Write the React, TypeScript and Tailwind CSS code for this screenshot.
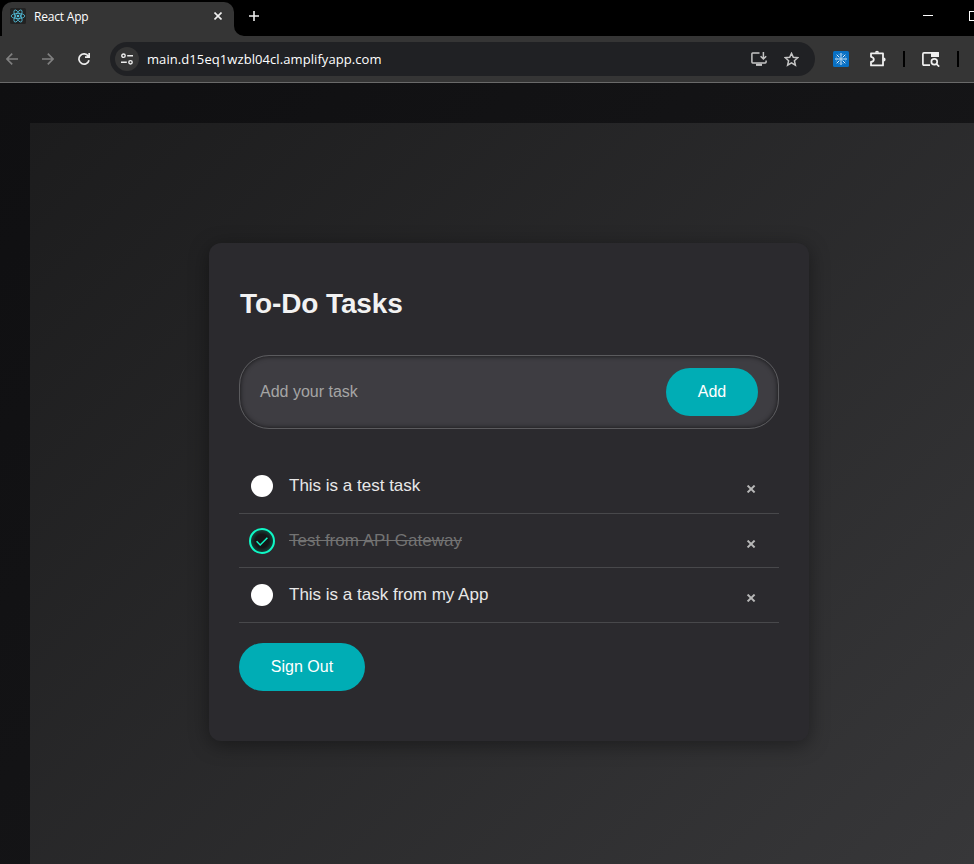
import React from "react";

const arial = "font-['Liberation_Sans',Arial,sans-serif]";

function Atom({ className }: { className: string }) {
  return (
    <svg viewBox="0 0 16 16" className={className} fill="none" stroke="#53c1de" strokeWidth="0.8">
      <rect width="16" height="16" rx="1.5" fill="#222222" stroke="none" />
      <ellipse cx="8" cy="8" rx="6.8" ry="2.6" />
      <ellipse cx="8" cy="8" rx="6.8" ry="2.6" transform="rotate(60 8 8)" />
      <ellipse cx="8" cy="8" rx="6.8" ry="2.6" transform="rotate(120 8 8)" />
      <circle cx="8" cy="8" r="1.3" fill="#53c1de" stroke="none" />
    </svg>
  );
}

function TabStrip() {
  return (
    <div className="flex h-9 bg-black pl-[2px]">
      <div className="relative mt-[2px] flex h-[34px] w-[232px] items-center rounded-t-[10px] bg-[#353535] pl-2 pb-[5px]">
        <Atom className="mt-[-1px] h-4 w-4" />
        <span className="mt-px ml-2 flex-1 text-[12px] leading-4 tracking-[-0.2px] text-white">React App</span>
        <svg className="mt-[-1px] mr-[12px] h-2 w-2" viewBox="0 0 8 8" stroke="#f0f0f0" strokeWidth="1.6">
          <path d="M0.5 0.5L7.5 7.5M7.5 0.5L0.5 7.5" />
        </svg>
        <svg className="absolute -right-[10px] bottom-0 h-[10px] w-[10px]" viewBox="0 0 10 10" fill="#353535">
          <path d="M0 0A10 10 0 0 0 10 10H0Z" />
        </svg>
      </div>
      <svg className="mt-[11px] ml-[15px] h-[10px] w-[10px]" viewBox="0 0 10 10" stroke="#eeeeee" strokeWidth="1.6">
        <path d="M5 0V10M0 5H10" />
      </svg>
      <div className="ml-auto flex pt-[11px]">
        <div className="mt-1 h-px w-[10px] bg-white" />
        <div className="ml-9 h-[10px] w-[5px] border border-r-0 border-white" />
      </div>
    </div>
  );
}

function Toolbar() {
  return (
    <div className="flex h-[47px] items-center border-b border-[#6a6a6a] bg-[#353535]">
      <svg className="ml-[6px] h-3 w-3" viewBox="0 0 12 12" fill="none" stroke="#808080" strokeWidth="1.6">
        <path d="M12 6H1M6.2 0.6L0.9 6L6.2 11.4" />
      </svg>
      <svg className="ml-6 h-3 w-3" viewBox="0 0 12 12" fill="none" stroke="#808080" strokeWidth="1.6">
        <path d="M0 6H11M5.8 0.6L11.1 6L5.8 11.4" />
      </svg>
      <svg className="ml-6 h-3 w-3" viewBox="0 0 12 12" fill="none" stroke="#eeeeee" strokeWidth="1.7">
        <path d="M10.3 3.2A5.1 5.1 0 1 0 11 7.2M11.2 0V4.2H7" />
      </svg>
      <div className="ml-5 flex h-[34px] w-[705px] items-center rounded-full bg-[#202124] pl-[5px]">
        <div className="flex h-6 w-6 items-center justify-center rounded-full bg-[#353535]">
          <svg className="h-3 w-3" viewBox="0 0 12 12" fill="none" stroke="#eeeeee" strokeWidth="1.4">
            <circle cx="2.5" cy="2.7" r="1.7" />
            <path d="M6.2 2.7H12M0 9.3H5.8" />
            <circle cx="9.5" cy="9.3" r="1.7" />
          </svg>
        </div>
        <span className="ml-2 text-[13px] leading-5 tracking-[0.08px] text-white">main.d15eq1wzbl04cl.amplifyapp.com</span>
        <svg className="ml-auto h-[14px] w-4" viewBox="0 0 16 14" fill="none" stroke="#c5c5c5" strokeWidth="1.5">
          <path d="M8.5 0.9H1.7Q0.9 0.9 0.9 1.7V10Q0.9 10.9 1.7 10.9H14.2Q15.1 10.9 15.1 10V8.6M12.4 0V6.5M9.6 4.2L12.4 7L15.2 4.2" />
          <path d="M5 12.8H11" strokeWidth="2.2" />
        </svg>
        <svg className="mr-4 ml-[17px] h-[15px] w-[15px]" viewBox="0 0 15 15" fill="none" stroke="#c5c5c5" strokeWidth="1.5">
          <path d="M7.5 1.4L9.3 5.3L13.7 5.7L10.4 8.7L11.4 13.2L7.5 10.9L3.6 13.2L4.6 8.7L1.3 5.7L5.7 5.3Z" />
        </svg>
      </div>
      <svg className="ml-[18px] h-4 w-4" viewBox="0 0 16 16" fill="none" stroke="#ffffff" strokeWidth="0.9">
        <rect width="16" height="16" rx="1.5" fill="#0870c4" stroke="none" />
        <circle cx="8" cy="8" r="1.2" />
        <path d="M8 2V5.8M8 10.2V14M2 8H5.8M10.2 8H14M3.7 3.7L6.4 6.4M9.6 9.6L12.3 12.3M12.3 3.7L9.6 6.4M6.4 9.6L3.7 12.3" />
        <path d="M5.8 2.8L6.3 4M10.2 2.8L9.7 4M5.8 13.2L6.3 12M10.2 13.2L9.7 12M2.8 5.8L4 6.3M13.2 5.8L12 6.3M2.8 10.2L4 9.7M13.2 10.2L12 9.7" strokeWidth="0.4" />
      </svg>
      <svg className="mb-[2px] ml-[21px] h-[17px] w-4" viewBox="0 0 16 17" fill="none" stroke="#f0f0f0" strokeWidth="1.8">
        <path d="M1 3.4H13V15.4H1V12Q3.8 11.5 3.8 9.4Q3.8 7.3 1 6.8Z" strokeLinejoin="round" />
        <path d="M5 2.8A2 2 0 0 1 9 2.8ZM13.6 7.4A2 2 0 0 1 13.6 11.4Z" fill="#f0f0f0" stroke="none" />
      </svg>
      <div className="ml-[17px] h-4 w-[2px] bg-black" />
      <svg className="ml-[17px] h-[15px] w-[18px]" viewBox="0 0 18 15" fill="none" stroke="#f0f0f0" strokeWidth="1.7">
        <path d="M8 13.2H2Q0.9 13.2 0.9 12V2.1Q0.9 0.9 2 0.9H16V4" />
        <path d="M9 0H16Q17 0 17 1V5H9Z" fill="#f0f0f0" stroke="none" />
        <circle cx="12.3" cy="9.7" r="2.9" />
        <path d="M14.3 11.8L17.2 14.6" />
      </svg>
      <div className="ml-[17px] h-4 w-[2px] bg-black" />
    </div>
  );
}

function Task({ text, done = false, height }: { text: string; done?: boolean; height: string }) {
  return (
    <li className={"flex items-start border-b border-[#48484b] pt-[14px] pr-[23px] pl-[10px] " + height}>
      {done ? (
        <svg className="h-[26px] w-[26px]" viewBox="0 0 26 26" fill="none">
          <defs>
            <radialGradient id="glow">
              <stop offset="0.55" stopColor="#151517" />
              <stop offset="1" stopColor="#15493f" />
            </radialGradient>
          </defs>
          <circle cx="13" cy="13" r="12" fill="url(#glow)" stroke="#0ff8c6" strokeWidth="2" />
          <path d="M7.6 13.2L11.2 17L18.4 9.8" stroke="#0ff8c6" strokeWidth="1.5" />
        </svg>
      ) : (
        <div className="m-[2px] h-[22px] w-[22px] rounded-full bg-white" />
      )}
      <span
        className={
          done
            ? "ml-[14px] text-[17px] leading-[26px] text-[#737373] line-through"
            : "ml-[14px] text-[17px] leading-[26px] text-[#e8e8e8]"
        }
      >
        {text}
      </span>
      <svg className="mt-[12px] ml-auto h-[8px] w-[10px]" viewBox="0 0 10 8" stroke="#b8b8b8" strokeWidth="2">
        <path d="M1.6 0.6L8.6 7.4M8.6 0.6L1.6 7.4" />
      </svg>
    </li>
  );
}

function TodoCard() {
  return (
    <main className="mt-[120px] ml-[179px] h-[498px] w-[600px] rounded-xl bg-[#2b2a2e] px-[30px] pt-[43px] shadow-[0_4px_20px_rgba(0,0,0,0.4)]">
      <h1 className="ml-px text-[28px] leading-9 font-bold tracking-[-0.1px] text-[#f2f2f2]">To-Do Tasks</h1>
      <div className="mt-[33px] flex h-[74px] items-center rounded-[30px] border border-[#5b5b5e] bg-[#3e3d42] pr-5 pl-5 shadow-[inset_0_0_5px_rgba(0,0,0,0.7)]">
        <span className="flex-1 text-[16px] text-[#a5a5a5]">Add your task</span>
        <button className="h-12 w-[92px] rounded-[25px] bg-[#00adb5] text-[16px] text-white">Add</button>
      </div>
      <ul className="mt-[30px]">
        <Task text="This is a test task" height="h-[55px]" />
        <Task text="Test from API Gateway" done height="h-[54px]" />
        <Task text="This is a task from my App" height="h-[55px]" />
      </ul>
      <button className="mt-5 h-12 w-[126px] rounded-[25px] bg-[#00adb5] text-[16px] text-white">Sign Out</button>
    </main>
  );
}

export default function App() {
  return (
    <div className="flex h-[864px] w-[974px] flex-col overflow-hidden font-['Open_Sans','Noto_Sans',sans-serif]">
      <TabStrip />
      <Toolbar />
      <div className={"flex-1 bg-[linear-gradient(135deg,#0f0f11,#19191b)] pt-10 pl-[30px] " + arial}>
        <div className="flex h-full items-start bg-[linear-gradient(135deg,#1c1c1d,#373739)]">
          <TodoCard />
        </div>
      </div>
    </div>
  );
}
